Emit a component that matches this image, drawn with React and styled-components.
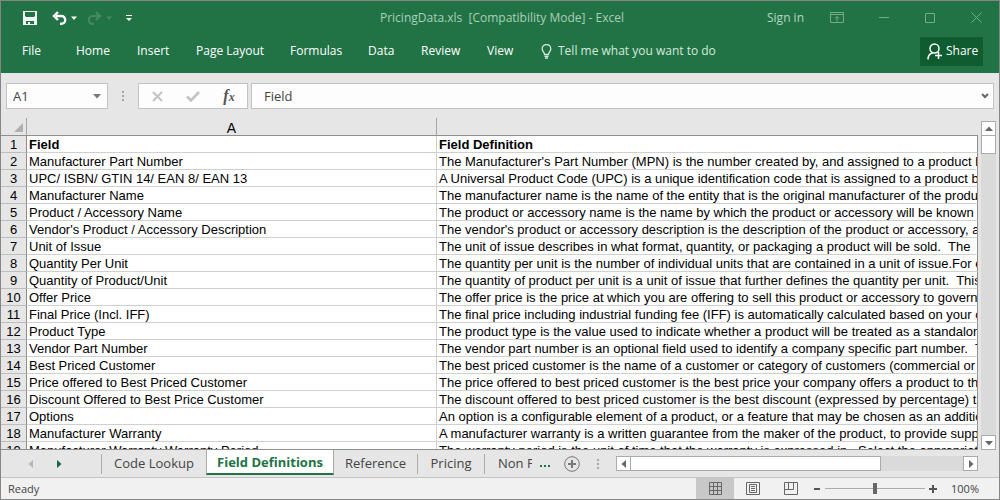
import React from 'react';
import styled, { createGlobalStyle, css } from 'styled-components';

const Global = createGlobalStyle`
  *, *::before, *::after { box-sizing: border-box; }
  body { margin: 0; background: #e6e6e6; }
  button, input { font: inherit; color: inherit; margin: 0; padding: 0; border: 0; background: none; border-radius: 0; }
  svg { display: block; flex: none; }
`;

const Window = styled.div`
  display: flex;
  flex-direction: column;
  height: 100vh;
  border: 1px solid #868686;
  background: #e6e6e6;
  color: #444;
  font: 12px/16px "Open Sans", "Noto Sans", sans-serif;
  overflow: hidden;
`;

const Header = styled.header`
  background: #217346;
  color: #fff;
`;

const TitleBar = styled.div`
  display: grid;
  grid-template-columns: 1fr auto 1fr;
  align-items: center;
  height: 33px;
  padding: 0 17px 0 21px;
`;

const QuickAccess = styled.div`
  display: flex;
  align-items: center;
`;

const IconButton = styled.button`
  display: flex;
  align-items: center;
  justify-content: center;
  width: ${(p) => p.$w || 16}px;
  height: 16px;
  margin-left: ${(p) => p.$gap || 0}px;
  color: ${(p) => p.$color || 'inherit'};
`;

const Title = styled.h1`
  margin: 0;
  font: inherit;
  color: #a9cfb8;
  white-space: pre;
`;

const WindowControls = styled.div`
  display: flex;
  align-items: center;
  justify-content: flex-end;
  color: #73ab8a;
`;

const SignIn = styled.button`
  color: #b4d5c1;
  margin-right: 26px;
`;

const Ribbon = styled.nav`
  display: flex;
  align-items: center;
  height: 39px;
  padding: 0 16px 5px 21px;
`;

const RibbonTab = styled.button`
  width: ${(p) => p.$w}px;
  text-align: left;
  white-space: nowrap;
`;

const TellMe = styled.label`
  display: flex;
  align-items: center;
  gap: 6px;
  flex: 1;
  color: #d5e8dc;
  input { width: 200px; outline: 0; }
  input::placeholder { color: #d5e8dc; opacity: 1; }
`;

const ShareButton = styled.button`
  display: flex;
  align-items: center;
  gap: 3px;
  height: 29px;
  width: 63px;
  padding-left: 7px;
  background: #0e5c2f;
`;

const FormulaBar = styled.div`
  display: flex;
  align-items: center;
  padding: 10px 5px 9px 5px;
  font-size: 13px;
`;

const Box = styled.div`
  display: flex;
  align-items: center;
  height: 26px;
  border: 1px solid #c3c3c3;
  background: #fdfdfd;
  ${(p) => (p.$w ? css`width: ${p.$w}px;` : css`flex: 1;`)}
  padding: ${(p) => p.$pad};
  justify-content: space-between;
  input { flex: 1; min-width: 0; outline: 0; }
`;

const FunctionMark = styled.span`
  font: italic bold 16px/16px "Liberation Serif", serif;
  small { font-size: 12px; }
`;

const Grip = styled.div`
  width: ${(p) => p.$w}px;
  display: flex;
  justify-content: center;
`;

const Workspace = styled.main`
  display: flex;
  flex: 1;
  min-height: 0;
  padding-right: 3px;
  gap: 3px;
`;

const GridArea = styled.div`
  flex: 1;
  min-width: 0;
  overflow: hidden;
  background: #e6e6e6;
  border-bottom: 1px solid #8f8f8f;
`;

const Sheet = styled.table`
  width: 100%;
  table-layout: fixed;
  border-collapse: separate;
  border-spacing: 0;
  font: 13px/14px "Liberation Sans", Arial, sans-serif;
  color: #000;
`;

const ColHead = styled.th`
  height: 18px;
  padding: 2px 0 0;
  font-weight: normal;
  font-size: 14px;
  border-bottom: 1px solid #8f8f8f;
  border-right: ${(p) => (p.$last ? '0' : '1px solid #a6a6a6')};
  svg { margin: 0 3px 0 auto; }
`;

const RowHead = styled.th`
  height: 17px;
  padding: 2px 0 0;
  font-weight: normal;
  text-align: center;
  border-bottom: 1px solid #bdbdbd;
  border-right: 1px solid #8f8f8f;
`;

const Cell = styled.td`
  height: 17px;
  padding: 2px 0 0 2px;
  background: #fff;
  font-weight: ${(p) => (p.$bold ? 'bold' : 'normal')};
  border-bottom: 1px solid #d0d0d0;
  border-right: 1px solid ${(p) => (p.$last ? '#8f8f8f' : '#d0d0d0')};
  white-space: pre;
  overflow: hidden;
`;

const VScroll = styled.div`
  display: flex;
  flex-direction: column;
  width: 15px;
  margin-top: 3px;
  background: #dadada;
`;

const HScroll = styled.div`
  display: flex;
  flex: 1;
  height: 15px;
  background: #dadada;
`;

const ScrollButton = styled.button`
  display: flex;
  align-items: center;
  justify-content: center;
  flex: none;
  width: 15px;
  height: 15px;
  border: 1px solid #ababab;
  background: #fff;
  color: #666;
`;

const Thumb = styled.div`
  border: 1px solid #ababab;
  background: #fff;
  ${(p) => (p.$vertical
    ? css`height: 18px; border-top: 0;`
    : css`width: 69%; border-left: 0;`)}
`;

const Track = styled.div`
  flex: 1;
`;

const SheetBar = styled.div`
  display: flex;
  align-items: center;
  height: 28px;
  padding-right: 21px;
  border-bottom: 1px solid #c3c3c3;
  font-size: 13px;
`;

const TabNav = styled.div`
  display: flex;
  align-items: center;
  width: 101px;
  padding-left: 22px;
  height: 20px;
  border-right: 1px solid #ababab;
`;

const SheetTab = styled.button`
  flex: none;
  width: ${(p) => p.$w}px;
  height: 20px;
  padding-bottom: 2px;
  overflow: hidden;
  white-space: nowrap;
  border-right: ${(p) => (p.$rule ? '1px solid #ababab' : '0')};
  ${(p) => p.$cut && css`
    text-align: left;
    padding-left: 13px;
  `}
  ${(p) => p.$active && css`
    height: 25px;
    padding-bottom: 0;
    align-self: flex-start;
    background: #fff;
    color: #217346;
    font-weight: bold;
    border-right: 1px solid #ababab;
    border-left: 1px solid #ababab;
    border-bottom: 2px solid #217346;
  `}
`;

const StatusBar = styled.footer`
  display: flex;
  align-items: center;
  height: 21px;
  padding: 0 20px 0 7px;
  background: #f1f1f1;
  font-size: 11px;
`;

const Status = styled.span`
  flex: 1;
`;

const ViewButton = styled.button`
  display: flex;
  align-items: center;
  justify-content: center;
  width: 38px;
  height: 21px;
  color: #666;
  background: ${(p) => (p.$on ? '#c8c8c8' : 'transparent')};
`;

const Zoom = styled.input`
  appearance: none;
  width: 100px;
  height: 12px;
  margin: 0 4px;
  background: linear-gradient(#ababab, #ababab) center / 100% 1px no-repeat;
  &::-webkit-slider-thumb {
    appearance: none;
    width: 4px;
    height: 11px;
    background: #666;
  }
`;

const ZoomValue = styled.span`
  width: 42px;
  text-align: right;
`;

const Arrow = ({ dir = 'down', size = 8, color = 'currentColor' }) => {
  const turn = { down: 0, left: 90, up: 180, right: 270 }[dir];
  return (
    <svg width={size} height={size} viewBox="0 0 8 8" aria-hidden="true">
      <path d="M0 2h8L4 6.5z" fill={color} transform={`rotate(${turn} 4 4)`} />
    </svg>
  );
};

const Dots = ({ h = 12 }) => (
  <svg width="2" height={h} viewBox="0 0 2 12" fill="#a6a6a6" aria-hidden="true">
    <path d="M0 1h2v2H0zM0 5h2v2H0zM0 9h2v2H0z" />
  </svg>
);

const TABS = [
  ['File', 54], ['Home', 61], ['Insert', 59], ['Page Layout', 94],
  ['Formulas', 78], ['Data', 53], ['Review', 66], ['View', 54],
];

const ROWS = [
  ['Field', 'Field Definition'],
  ['Manufacturer Part Number', "The Manufacturer's Part Number (MPN) is the number created by, and assigned to a product by"],
  ['UPC/ ISBN/ GTIN 14/ EAN 8/ EAN 13', 'A Universal Product Code (UPC) is a unique identification code that is assigned to a product by'],
  ['Manufacturer Name', 'The manufacturer name is the name of the entity that is the original manufacturer of the product'],
  ['Product / Accessory Name', 'The product or accessory name is the name by which the product or accessory will be known'],
  ["Vendor's Product / Accessory Description", "The vendor's product or accessory description is the description of the product or accessory, as"],
  ['Unit of Issue', 'The unit of issue describes in what format, quantity, or packaging a product will be sold.  The'],
  ['Quantity Per Unit', 'The quantity per unit is the number of individual units that are contained in a unit of issue.For e'],
  ['Quantity of Product/Unit', 'The quantity of product per unit is a unit of issue that further defines the quantity per unit.  This'],
  ['Offer Price', 'The offer price is the price at which you are offering to sell this product or accessory to government'],
  ['Final Price (Incl. IFF)', 'The final price including industrial funding fee (IFF) is automatically calculated based on your offer'],
  ['Product Type', 'The product type is the value used to indicate whether a product will be treated as a standalone'],
  ['Vendor Part Number', 'The vendor part number is an optional field used to identify a company specific part number.  The'],
  ['Best Priced Customer', 'The best priced customer is the name of a customer or category of customers (commercial or'],
  ['Price offered to Best Priced Customer', 'The price offered to best priced customer is the best price your company offers a product to the'],
  ['Discount Offered to Best Price Customer', 'The discount offered to best priced customer is the best discount (expressed by percentage) that'],
  ['Options', 'An option is a configurable element of a product, or a feature that may be chosen as an additional'],
  ['Manufacturer Warranty', 'A manufacturer warranty is a written guarantee from the maker of the product, to provide support'],
  ['Manufacturer Warranty Warranty Period', 'The warranty period is the unit of time that the warranty is expressed in.  Select the appropriate'],
];

export default function App() {
  return (
    <>
      <Global />
      <Window>
        <Header>
          <TitleBar>
            <QuickAccess>
              <IconButton aria-label="Save">
                <svg width="14" height="14" viewBox="0 0 14 14">
                  <path fill="#f4f8f5" fillRule="evenodd" d="M0 0h14v14H0zM2 1v4l1 1h8l1-1V1zM3 10v3h2v-2h2v2h4v-3z" />
                </svg>
              </IconButton>
              <IconButton aria-label="Undo" $gap={13}>
                <svg width="15" height="14" viewBox="0 0 15 14" fill="none" stroke="#fff" strokeWidth="2.400">
                  <path d="M6 1L2 5l4 4M2.500 5H9.300a3.900 3.900 0 0 1 0 7.800H8" />
                </svg>
              </IconButton>
              <IconButton aria-label="Undo list" $w={14}><Arrow size={6} /></IconButton>
              <IconButton aria-label="Redo" $gap={5} $color="#47895f">
                <svg width="15" height="14" viewBox="0 0 15 14" fill="none" stroke="currentColor" strokeWidth="2.200">
                  <path d="M9 1l4 4-4 4M12.500 5H5.700a3.900 3.900 0 0 0 0 7.800H7" />
                </svg>
              </IconButton>
              <IconButton aria-label="Redo list" $w={14} $color="#47895f"><Arrow size={6} /></IconButton>
              <IconButton aria-label="Customize Quick Access Toolbar" $gap={5}>
                <svg width="6" height="8" viewBox="0 0 6 8" fill="#fff">
                  <path d="M0 1h6v1H0zM0 4h6L3 7z" />
                </svg>
              </IconButton>
            </QuickAccess>
            <Title>PricingData.xls  [Compatibility Mode] - Excel</Title>
            <WindowControls>
              <SignIn>Sign in</SignIn>
              <IconButton aria-label="Ribbon display options" $w={14}>
                <svg width="14" height="11" viewBox="0 0 14 11" fill="none" stroke="currentColor">
                  <path d="M.5.5h13v10H.5zM.5 2.500h13M7 9.500v-5M5 6.500l2-2 2 2" />
                </svg>
              </IconButton>
              <IconButton aria-label="Minimize" $w={12} $gap={34}>
                <svg width="10" height="10" viewBox="0 0 10 10" stroke="currentColor"><path d="M0 4.500h10" /></svg>
              </IconButton>
              <IconButton aria-label="Maximize" $w={12} $gap={34}>
                <svg width="10" height="10" viewBox="0 0 10 10" fill="none" stroke="currentColor"><path d="M.5.5h9v9h-9z" /></svg>
              </IconButton>
              <IconButton aria-label="Close" $w={12} $gap={34}>
                <svg width="11" height="11" viewBox="0 0 11 11" stroke="currentColor"><path d="M.5.5l10 10M10.500.5l-10 10" /></svg>
              </IconButton>
            </WindowControls>
          </TitleBar>
          <Ribbon>
            {TABS.map(([name, w]) => <RibbonTab key={name} $w={w}>{name}</RibbonTab>)}
            <TellMe>
              <svg width="11" height="15" viewBox="0 0 11 15" fill="none" stroke="currentColor" strokeWidth="1.300">
                <path d="M3.500 10.500C3.500 8 1.200 7.500 1.200 4.800a4.300 4.300 0 0 1 8.600 0C9.800 7.500 7.500 8 7.500 10.500zM3.500 12.300h4M4 14h3" />
              </svg>
              <input type="text" aria-label="Tell me" placeholder="Tell me what you want to do" />
            </TellMe>
            <ShareButton>
              <svg width="16" height="17" viewBox="0 0 16 17" fill="none" stroke="#fff" strokeWidth="1.500">
                <circle cx="7.500" cy="5.500" r="4.500" />
                <path d="M1 16.500c0-4 2-6 5-6.700M11.500 9v7M8 12.500h7" />
              </svg>
              Share
            </ShareButton>
          </Ribbon>
        </Header>

        <FormulaBar>
          <Box $w={102} $pad="0 6px">
            <input type="text" aria-label="Name box" defaultValue="A1" />
            <IconButton aria-label="Name list" $w={8}><Arrow color="#777" /></IconButton>
          </Box>
          <Grip $w={30}><Dots /></Grip>
          <Box $w={110} $pad="0 10px">
            <IconButton aria-label="Cancel" $color="#c3c3c3">
              <svg width="11" height="11" viewBox="0 0 11 11" stroke="currentColor" strokeWidth="2"><path d="M1 1l9 9M10 1l-9 9" /></svg>
            </IconButton>
            <IconButton aria-label="Enter" $color="#c3c3c3">
              <svg width="14" height="11" viewBox="0 0 14 11" fill="none" stroke="currentColor" strokeWidth="2.600"><path d="M1 5.500l4 4L13 1" /></svg>
            </IconButton>
            <IconButton aria-label="Insert function" $color="#555">
              <FunctionMark>f<small>x</small></FunctionMark>
            </IconButton>
          </Box>
          <Grip $w={3} />
          <Box $pad="0 4px 0 12px">
            <input type="text" aria-label="Formula" defaultValue="Field" />
            <IconButton aria-label="Expand formula bar" $w={8} $color="#666">
              <svg width="8" height="6" viewBox="0 0 8 6" fill="none" stroke="currentColor" strokeWidth="2"><path d="M1 1l3 3 3-3" /></svg>
            </IconButton>
          </Box>
        </FormulaBar>

        <Workspace>
          <GridArea>
            <Sheet>
              <colgroup>
                <col style={{ width: 26 }} />
                <col style={{ width: 410 }} />
                <col />
              </colgroup>
              <thead>
                <tr>
                  <ColHead aria-label="Select all">
                    <svg width="9" height="9" viewBox="0 0 9 9"><path d="M9 0v9H0z" fill="#b0b0b0" /></svg>
                  </ColHead>
                  <ColHead>A</ColHead>
                  <ColHead $last aria-label="B" />
                </tr>
              </thead>
              <tbody>
                {ROWS.map(([field, text], i) => (
                  <tr key={field}>
                    <RowHead scope="row">{i + 1}</RowHead>
                    <Cell $bold={i === 0}>{field}</Cell>
                    <Cell $bold={i === 0} $last>{text}</Cell>
                  </tr>
                ))}
              </tbody>
            </Sheet>
          </GridArea>
          <VScroll>
            <ScrollButton aria-label="Scroll up"><Arrow dir="up" /></ScrollButton>
            <Thumb $vertical />
            <Track />
            <ScrollButton aria-label="Scroll down"><Arrow /></ScrollButton>
          </VScroll>
        </Workspace>

        <SheetBar>
          <TabNav>
            <IconButton aria-label="Previous sheet" $color="#b8b8b8"><Arrow dir="left" /></IconButton>
            <IconButton aria-label="Next sheet" $gap={12} $color="#0e6b38"><Arrow dir="right" /></IconButton>
          </TabNav>
          <SheetTab $w={104}>Code Lookup</SheetTab>
          <SheetTab $w={128} $active>Field Definitions</SheetTab>
          <SheetTab $w={84} $rule>Reference</SheetTab>
          <SheetTab $w={67} $rule>Pricing</SheetTab>
          <SheetTab $w={47} $cut>Non Products</SheetTab>
          <IconButton aria-label="More sheets" $w={12} $gap={7} $color="#217346">
            <svg width="11" height="6" viewBox="0 0 11 6" fill="currentColor"><path d="M0 4h2v2H0zM4 4h2v2H4zM8 4h2v2H8z" /></svg>
          </IconButton>
          <IconButton aria-label="New sheet" $gap={13}>
            <svg width="16" height="16" viewBox="0 0 16 16" fill="none" stroke="#777">
              <circle cx="8" cy="8" r="7.300" />
              <path d="M8 4v8M4 8h8" strokeWidth="2" />
            </svg>
          </IconButton>
          <Grip $w={36}><Dots /></Grip>
          <HScroll>
            <ScrollButton aria-label="Scroll left"><Arrow dir="left" /></ScrollButton>
            <Thumb />
            <Track />
            <ScrollButton aria-label="Scroll right"><Arrow dir="right" /></ScrollButton>
          </HScroll>
        </SheetBar>

        <StatusBar>
          <Status>Ready</Status>
          <ViewButton aria-label="Normal view" $on>
            <svg width="13" height="13" viewBox="0 0 13 13" fill="none" stroke="currentColor"><path d="M.5.5h12v12H.5zM4.500.5v12M8.500.5v12M.5 4.500h12M.5 8.500h12" /></svg>
          </ViewButton>
          <ViewButton aria-label="Page layout view">
            <svg width="14" height="13" viewBox="0 0 14 13" fill="none" stroke="currentColor"><path d="M.5.5h13v12H.5zM3.500 2.500h7v8h-7zM5 4.500h4M5 6.500h4M5 8.500h4" /></svg>
          </ViewButton>
          <ViewButton aria-label="Page break preview">
            <svg width="14" height="13" viewBox="0 0 14 13" fill="none" stroke="currentColor"><path d="M.5.5h13v12H.5zM4.500.5v7M9.500.5v7M.5 7.500h9" /></svg>
          </ViewButton>
          <IconButton aria-label="Zoom out" $w={8} $gap={3} $color="#555">
            <svg width="6" height="2" viewBox="0 0 6 2"><path d="M0 0h6v2H0z" fill="currentColor" /></svg>
          </IconButton>
          <Zoom type="range" aria-label="Zoom" min="0" max="100" defaultValue="50" />
          <IconButton aria-label="Zoom in" $w={8} $color="#555">
            <svg width="8" height="8" viewBox="0 0 8 8"><path d="M3 0h2v3h3v2H5v3H3V5H0V3h3z" fill="currentColor" /></svg>
          </IconButton>
          <ZoomValue>100%</ZoomValue>
        </StatusBar>
      </Window>
    </>
  );
}
